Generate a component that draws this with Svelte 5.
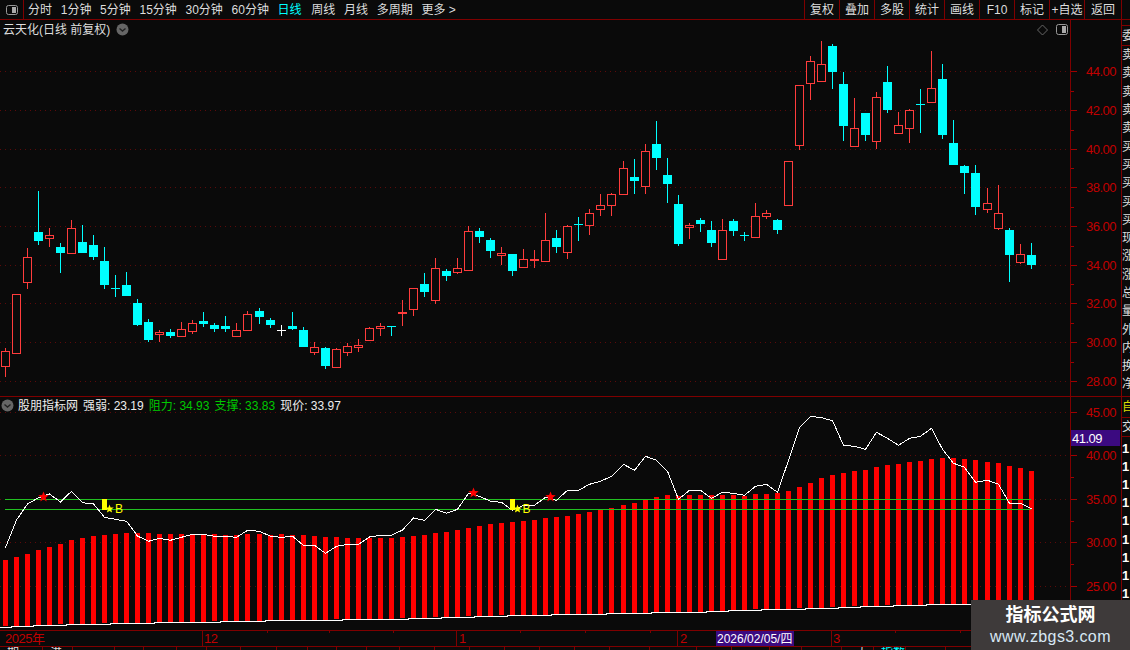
<script>
  const tabs = [
    { t: '分时' }, { t: '1分钟' }, { t: '5分钟' }, { t: '15分钟' }, { t: '30分钟' }, { t: '60分钟' },
    { t: '日线', on: true }, { t: '周线' }, { t: '月线' }, { t: '多周期' }, { t: '更多 >' }
  ];
  const actions = ['复权', '叠加', '多股', '统计', '画线', 'F10', '标记', '+自选', '返回'];
  const X = (i) => Math.floor(5.33 + i * 11.03);

  const candles = [
    ['r',348,351,366,377],['r',294,294,353,353],['r',248,257,282,289],['c',191,232,241,245],['r',228,235,238,247],
    ['c',243,247,253,273],['r',220,228,253,253],['c',225,242,253,253],['c',235,245,257,260],['c',247,261,285,289],
    ['c',275,288,288,297],['c',272,285,296,296],['c',299,303,325,326],['c',319,322,340,342],['r',330,332,334,342],
    ['c',329,332,336,338],['r',322,329,336,336],['r',320,323,331,334],['c',312,321,324,327],['c',323,325,329,332],
    ['c',316,326,329,332],['r',323,330,336,336],['r',311,314,330,330],['c',308,311,317,324],['c',318,320,325,328],
    ['w',325,330,330,336],['c',312,326,329,330],['c',327,330,347,347],['r',342,347,352,355],['c',347,348,366,369],
    ['r',348,349,367,367],['r',343,346,352,356],['r',339,345,347,352],['r',327,328,340,340],['r',323,326,328,336],
    ['c',326,326,326,336],['r',300,312,312,326],['r',288,288,309,316],['c',273,284,292,297],['r',258,268,300,304],
    ['c',269,271,276,281],['r',258,268,272,274],['r',226,231,270,270],['c',228,231,237,243],['c',238,240,251,258],
    ['r',247,253,255,265],['c',254,254,271,276],['r',249,259,267,267],['r',250,259,259,268],['r',213,240,261,261],
    ['c',230,238,247,253],['r',225,226,252,259],['c',217,224,224,241],['r',209,213,225,235],['r',194,205,209,216],
    ['r',193,194,205,216],['r',161,168,194,194],['c',159,177,181,194],['r',144,151,186,194],['c',121,144,158,170],
    ['c',158,175,184,203],['c',195,204,244,246],['r',223,225,227,239],['c',218,220,224,232],['c',221,230,243,247],
    ['r',219,230,259,259],['c',219,221,231,236],['c',232,235,235,241],['r',203,216,237,237],['r',210,213,216,219],
    ['c',219,220,230,234],['r',161,161,205,205],['r',85,85,145,150],['r',56,61,83,100],['r',41,64,81,81],
    ['c',44,46,72,89],['c',72,84,126,141],['r',98,128,146,146],['c',113,113,135,141],['r',92,97,141,149],
    ['c',66,82,110,113],['r',112,125,133,133],['r',109,110,128,143],['c',89,104,104,133],['r',51,88,102,102],
    ['c',64,79,135,139],['c',120,143,165,165],['c',165,166,173,194],['c',165,173,207,215],['r',188,203,209,213],
    ['r',185,213,228,230],['c',228,230,255,282],['r',244,254,262,264],['c',243,255,265,269]
  ];

  const tops = [
    560,557,554,550,547,544,540,538,536,535,534,533,533,533,534,534,534,535,535,534,535,535,534,534,535,534,535,535,536,537,537,538,538,538,538,538,
    537,536,535,533,532,530,528,526,524,523,522,521,520,518,517,516,514,512,510,508,505,503,500,497,495,496,495,495,495,495,
    495,496,494,494,493,491,487,483,478,475,473,471,470,467,465,464,462,461,459,458,458,459,460,462,463,466,468,471
  ];

  const prices = [
    547.7,520,504,497.7,494,502,491.3,502.7,504,517.3,519.3,521.3,536,541.3,538.3,540.3,537.3,534.3,534.3,536.3,
    536.3,537.3,530.3,531.3,536.3,537.3,536.3,545.3,545.3,553.3,546.3,544.3,544.3,537,535.3,535.3,530,518,520.3,509.3,
    513.3,509.3,493.3,496.3,501.3,502.3,510.3,505.3,505.3,497.3,500.3,490.3,490.3,484.3,481.3,476.3,464.3,470.3,456.3,460.3,
    471.3,499.3,490.3,490.3,498.3,492.3,493.3,495.3,486.3,484.3,492.3,460.3,427.3,416.3,417.7,420.7,445.3,446.3,449.3,432.3,
    438.3,445.3,438.3,436.3,428.3,449.3,463.3,467.3,482.3,480.3,484.3,503.3,503.3,508.7
  ];
  const priceLine = prices.map((y, i) => `${X(i) + 0.5},${y}`).join(' ');

  const floorPts = [[0,626.5],[55,624.5],[100,623.5],[153,622.5],[209,621.5],[264,620.5],[331,619.5],[397,618.5],[500,615.5],[600,613.5],[700,611.5],[750,609.5],[816,608],[850,606.5],[900,605],[950,604],[1032,602]];
  function floorY(x) {
    for (let k = 1; k < floorPts.length; k++) {
      const [x0, y0] = floorPts[k - 1], [x1, y1] = floorPts[k];
      if (x <= x1) return Math.round(y0 + (y1 - y0) * (x - x0) / (x1 - x0));
    }
    return 602;
  }
  let stair = `M0 ${floorY(0) + 0.5}`;
  for (let i = 0; i < 94; i++) stair += ` H${X(i) + 6} V${floorY(X(i) + 6) + 0.5}`;

  const priceGrid = [[44,71],[42,110],[40,149],[38,187],[36,226],[34,265],[32,303],[30,342],[28,381]];
  const lowGrid = [[45,412],[40,455],[35,499],[30,542],[25,586]];

  function star(cx, cy, r) {
    const p = [];
    for (let k = 0; k < 10; k++) {
      const a = -Math.PI / 2 + k * Math.PI / 5;
      const d = k % 2 ? r * 0.42 : r;
      p.push(`${(cx + d * Math.cos(a)).toFixed(1)},${(cy + d * Math.sin(a)).toFixed(1)}`);
    }
    return p.join(' ');
  }
  const redStars = [[43.5,497],[473.5,493],[550.5,497]];
  const buys = [{ x: 102, sx: 109.5, bx: 115 }, { x: 510, sx: 517.5, bx: 522.5 }];

  const railTop = ['卖','卖','卖','卖','卖','买','买','买','买','买','现','涨','涨','总','量','外','内','换','净'];
  const railLow = Array.from({ length: 10 }, () => '1');
  const foot = [
    { w: 43, t: '期' }, { w: 30, t: '港' }, { w: 42 }, { w: 29 }, { w: 33 }, { w: 30 }, { w: 34 }, { w: 36 }, { w: 31 }, { w: 29 }, { w: 30 },
    { w: 33 }, { w: 35 }, { w: 35 }, { w: 35 }, { w: 35 }, { w: 35 }, { w: 35 }, { w: 40 }, { w: 47 }, { w: 35 },
    { w: 38 }, { w: 32 }, { w: 40 }, { w: 32, t: '大', end: true }, { w: 32, t: '指数', hot: true }, { w: 40 }
  ];
</script>

<div class="screen">
  <header class="toolbar">
    <button class="panel-btn" aria-label="切换面板">
      <svg width="14" height="12" viewBox="0 0 14 12"><rect x="1.5" y="1.5" width="11" height="9" rx="2" class="ico-line"/><rect x="7" y="3" width="4" height="6" class="ico-fill"/></svg>
    </button>
    <nav class="tabs">
      {#each tabs as tab}
        <span class="tab" class:on={tab.on}>{tab.t}</span>
      {/each}
    </nav>
    <div class="actions">
      {#each actions as a}
        <span class="action">{a}</span>
      {/each}
    </div>
    <div class="toolbar-end"></div>
  </header>

  <div class="work">
    <div class="charts">
      <section class="pane price-pane">
        <div class="legend">
          <span>云天化(日线 前复权)</span>
          <svg class="chev" width="13" height="13" viewBox="0 0 13 13"><circle cx="6.5" cy="6.5" r="6" fill="#666"/><path d="M3.5 5.5l3 2.5 3-2.5" fill="none" stroke="#222" stroke-width="1.4"/></svg>
        </div>
        <svg class="corner" width="32" height="14" viewBox="0 0 32 14">
          <path d="M5.5 2l5 5-5 5-5-5z" fill="none" stroke="#666"/>
          <rect x="19.5" y="1.5" width="11" height="10" rx="2" class="ico-line"/><rect x="25" y="3" width="4" height="7" class="ico-fill"/>
        </svg>
        <svg class="plot" width="1070" height="376" viewBox="0 20 1070 376">
          {#each priceGrid as g}
            <line x1="0" x2="1070" y1={g[1] + 0.5} y2={g[1] + 0.5} class="dots"/>
          {/each}
          {#each candles as c, i}
            {@const x = X(i)}
            {#if c[0] === 'r'}
              <rect x={x} y={c[1]} width="1" height={Math.max(0, c[2] - c[1])} fill="#ff3c3c"/>
              <rect x={x} y={c[3]} width="1" height={Math.max(0, c[4] - c[3])} fill="#ff3c3c"/>
              {#if c[3] - c[2] <= 1}
                <rect x={x - 4} y={c[2]} width="9" height="2" fill="#ff3c3c"/>
              {:else}
                <rect x={x - 3.5} y={c[2] + 0.5} width="8" height={c[3] - c[2]} fill="#0a0a0a" stroke="#ff3c3c"/>
              {/if}
            {:else}
              <rect x={x} y={c[1]} width="1" height={c[4] - c[1]} fill={c[0] === 'w' ? '#fff' : '#0ff'}/>
              {#if c[2] === c[3]}
                <rect x={x - 4} y={c[2]} width="9" height="1" fill={c[0] === 'w' ? '#fff' : '#0ff'}/>
              {:else}
                <rect x={x - 4} y={c[2]} width="9" height={c[3] - c[2]} fill="#0ff"/>
              {/if}
            {/if}
          {/each}
        </svg>
        <svg class="axis" width="50" height="376" viewBox="1071 20 50 376">
          {#each priceGrid as g, k}
            <rect x="1071" y={g[1]} width="6" height="1" fill="#a00000"/>
            {#if k < priceGrid.length - 1}
              <rect x="1071" y={Math.round((g[1] + priceGrid[k + 1][1]) / 2)} width="3" height="1" fill="#a00000"/>
            {/if}
            <text x="1086" y={g[1] + 5} class="axis-num">{g[0]}.00</text>
          {/each}
        </svg>
      </section>

      <section class="pane low-pane">
        <div class="legend low-legend">
          <svg width="13" height="13" viewBox="0 0 13 13"><circle cx="6.5" cy="6.5" r="6" fill="#666"/><path d="M3.5 5.5l3 2.5 3-2.5" fill="none" stroke="#222" stroke-width="1.4"/></svg>
          <span class="nm">股朋指标网</span>
          <span>强弱: 23.19</span>
          <span class="g">阻力: 34.93</span>
          <span class="g">支撑: 33.83</span>
          <span>现价: 33.97</span>
        </div>
        <svg class="plot" width="1070" height="233" viewBox="0 397 1070 233">
          {#each lowGrid as g}
            <line x1="0" x2="1070" y1={g[1] + 0.5} y2={g[1] + 0.5} class="dots"/>
          {/each}
          {#each tops as t, i}
            <rect x={X(i) - 2} y={t} width="5" height={floorY(X(i)) - t} fill="#f00"/>
          {/each}
          <path d={stair} fill="none" stroke="#fff" class="crisp"/>
          <rect x="5" y="499" width="1026" height="1" fill="#22c022"/>
          <rect x="5" y="509" width="1026" height="1" fill="#22c022"/>
          <polyline points={priceLine} fill="none" stroke="#fff" class="crisp"/>
          {#each redStars as s}
            <polygon points={star(s[0], s[1], 5.5)} fill="#f00"/>
          {/each}
          {#each buys as b}
            <rect x={b.x} y="499" width="5" height="11" fill="#ff0"/>
            <polygon points={star(b.sx, 509, 4.5)} fill="#ff0"/>
            <text x={b.bx} y="513" class="buy">B</text>
          {/each}
        </svg>
        <svg class="axis" width="50" height="233" viewBox="1071 397 50 233">
          {#each lowGrid as g, k}
            <rect x="1071" y={g[1]} width="6" height="1" fill="#a00000"/>
            {#if k < lowGrid.length - 1}
              <rect x="1071" y={Math.round((g[1] + lowGrid[k + 1][1]) / 2)} width="3" height="1" fill="#a00000"/>
            {/if}
            <text x="1086" y={g[1] + 5} class="axis-num">{g[0]}.00</text>
          {/each}
          <rect x="1071" y="430" width="49" height="16" fill="#3b0a80"/>
          <text x="1072" y="443" class="axis-num cur">41.09</text>
        </svg>
      </section>
    </div>

    <aside class="rail">
      <div class="rail-head"><span>委</span></div>
      <div class="rail-list">
        {#each railTop as g}<span>{g}</span>{/each}
      </div>
      <div class="rail-yellow"><span>自</span></div>
      <div class="rail-cell"><span>交</span></div>
      <div class="rail-nums">
        {#each railLow as n}<span>{n}</span>{/each}
      </div>
    </aside>
  </div>

  <div class="timeline">
    <svg width="1130" height="15" viewBox="0 631 1130 15">
      <text x="5" y="643" class="axis-num">2025年</text>
      <rect x="202" y="631" width="1" height="15" fill="#7f0000"/>
      <text x="204" y="643" class="axis-num">12</text>
      {#each [267, 329, 393, 520, 585, 650, 745, 895, 960] as t}
        <rect x={t} y="631" width="1" height="2" fill="#7f0000"/>
      {/each}
      <rect x="456" y="631" width="1" height="15" fill="#7f0000"/>
      <text x="459" y="643" class="axis-num">1</text>
      <rect x="677" y="631" width="1" height="15" fill="#7f0000"/>
      <text x="680" y="643" class="axis-num">2</text>
      <rect x="716" y="631" width="78" height="15" fill="#3b0a80"/>
      <text x="717" y="643" class="date">2026/02/05/四</text>
      <rect x="831" y="631" width="1" height="15" fill="#7f0000"/>
      <text x="833" y="643" class="axis-num">3</text>
    </svg>
  </div>

  <footer class="foot">
    {#each foot as f}
      <span class="cell" class:hot={f.hot} class:end={f.end} style="width:{f.w}px">{f.t ?? ''}</span>
    {/each}
  </footer>

  <aside class="stamp">
    <strong>指标公式网</strong>
    <span>www.zbgs3.com</span>
  </aside>
</div>

<style>
  :global(body) { margin: 0; background: #0a0a0a; }
  .screen {
    position: relative;
    width: 1130px;
    height: 650px;
    overflow: hidden;
    display: flex;
    flex-direction: column;
    background: #0a0a0a;
    color: #ddd;
    font: 12px/1 "Liberation Sans", "Noto Sans CJK SC", sans-serif;
  }
  .toolbar {
    height: 19px;
    flex: none;
    display: flex;
    align-items: stretch;
    border-bottom: 1px solid #7f0000;
  }
  .panel-btn {
    width: 24px;
    padding: 0;
    display: flex;
    align-items: center;
    justify-content: center;
    background: none;
    border: 0;
    border-right: 1px solid #7f0000;
  }
  .ico-line { fill: none; stroke: #999; }
  .ico-fill { fill: #aaa; }
  .tabs { display: flex; align-items: center; gap: 8.7px; padding-left: 4px; }
  .tab { white-space: nowrap; color: #ddd; }
  .tab.on { color: #0ff; margin-right: 1px; }
  .actions { margin-left: auto; display: flex; border-left: 1px solid #7f0000; }
  .action {
    width: 34px;
    border-right: 1px solid #7f0000;
    display: flex;
    align-items: center;
    justify-content: center;
    white-space: nowrap;
  }
  .action:last-child { width: 36px; }
  .toolbar-end { width: 8px; }

  .work { display: flex; flex: none; }
  .charts { width: 1121px; flex: none; }
  .pane { position: relative; display: flex; border-bottom: 1px solid #7f0000; }
  .plot, .axis { display: block; flex: none; }
  .axis { border-left: 1px solid #7f0000; }
  .dots { stroke: #5c0a0a; stroke-dasharray: 1 4; }
  .crisp { shape-rendering: crispEdges; }
  .axis-num {
    font: 13px "Liberation Sans", "Noto Sans CJK SC", sans-serif;
    letter-spacing: -0.5px;
    fill: #c00000;
  }
  .axis-num.cur { fill: #fff; }
  .date {
    font: 12px "Liberation Sans", "Noto Sans CJK SC", sans-serif;
    fill: #fff;
  }
  .buy { font: 12px "Liberation Sans", sans-serif; fill: #ff0; }

  .legend {
    position: absolute;
    left: 3px;
    top: 3px;
    display: flex;
    align-items: center;
    gap: 6px;
    white-space: nowrap;
  }
  .low-legend { left: 1px; top: 2px; color: #eee; gap: 5px; }
  .low-legend .nm { margin-left: -1px; }
  .low-legend .g { color: #00c800; }
  .corner { position: absolute; left: 1037px; top: 3px; }

  .rail {
    width: 8px;
    flex: none;
    border-left: 1px solid #7f0000;
    display: flex;
    flex-direction: column;
    overflow: hidden;
    color: #ddd;
  }
  .rail-head {
    margin-top: 5px;
    height: 19px;
    border-top: 1px solid #7f0000;
    border-bottom: 1px solid #7f0000;
    display: flex;
    align-items: center;
  }
  .rail-list { height: 350px; display: flex; flex-direction: column; overflow: hidden; border-bottom: 1px solid #7f0000; }
  .rail-list span { height: 18.3px; flex: none; display: flex; align-items: center; }
  .rail-yellow {
    height: 20px;
    display: flex;
    align-items: center;
    color: #dd0;
    border-bottom: 1px solid #7f0000;
  }
  .rail-cell { height: 18px; display: flex; align-items: center; border-bottom: 1px solid #7f0000; }
  .rail-nums { padding-top: 2px; display: flex; flex-direction: column; font-weight: 700; color: #fff; }
  .rail-nums span { height: 18.2px; flex: none; display: flex; align-items: center; font-size: 13px; }

  .timeline { height: 15px; flex: none; border-bottom: 1px solid #7f0000; }
  .timeline svg { display: block; }
  .foot { display: flex; height: 3px; overflow: hidden; flex: none; }
  .cell {
    flex: none;
    box-sizing: border-box;
    height: 3px;
    border-right: 1px solid #7f0000;
    padding-left: 7px;
    line-height: 12px;
    overflow: hidden;
    white-space: nowrap;
  }
  .cell.hot { color: #0ff; }
  .cell.end { text-align: right; padding-right: 5px; }

  .stamp {
    position: absolute;
    right: 0;
    bottom: 0;
    width: 159px;
    height: 50px;
    background: #3e3a3a;
    display: flex;
    flex-direction: column;
    align-items: center;
    justify-content: center;
    gap: 5px;
    color: #fff;
  }
  .stamp strong { font-size: 18px; font-weight: 700; }
  .stamp span { font-size: 16px; color: #d8e8f4; letter-spacing: 0.4px; }
</style>
